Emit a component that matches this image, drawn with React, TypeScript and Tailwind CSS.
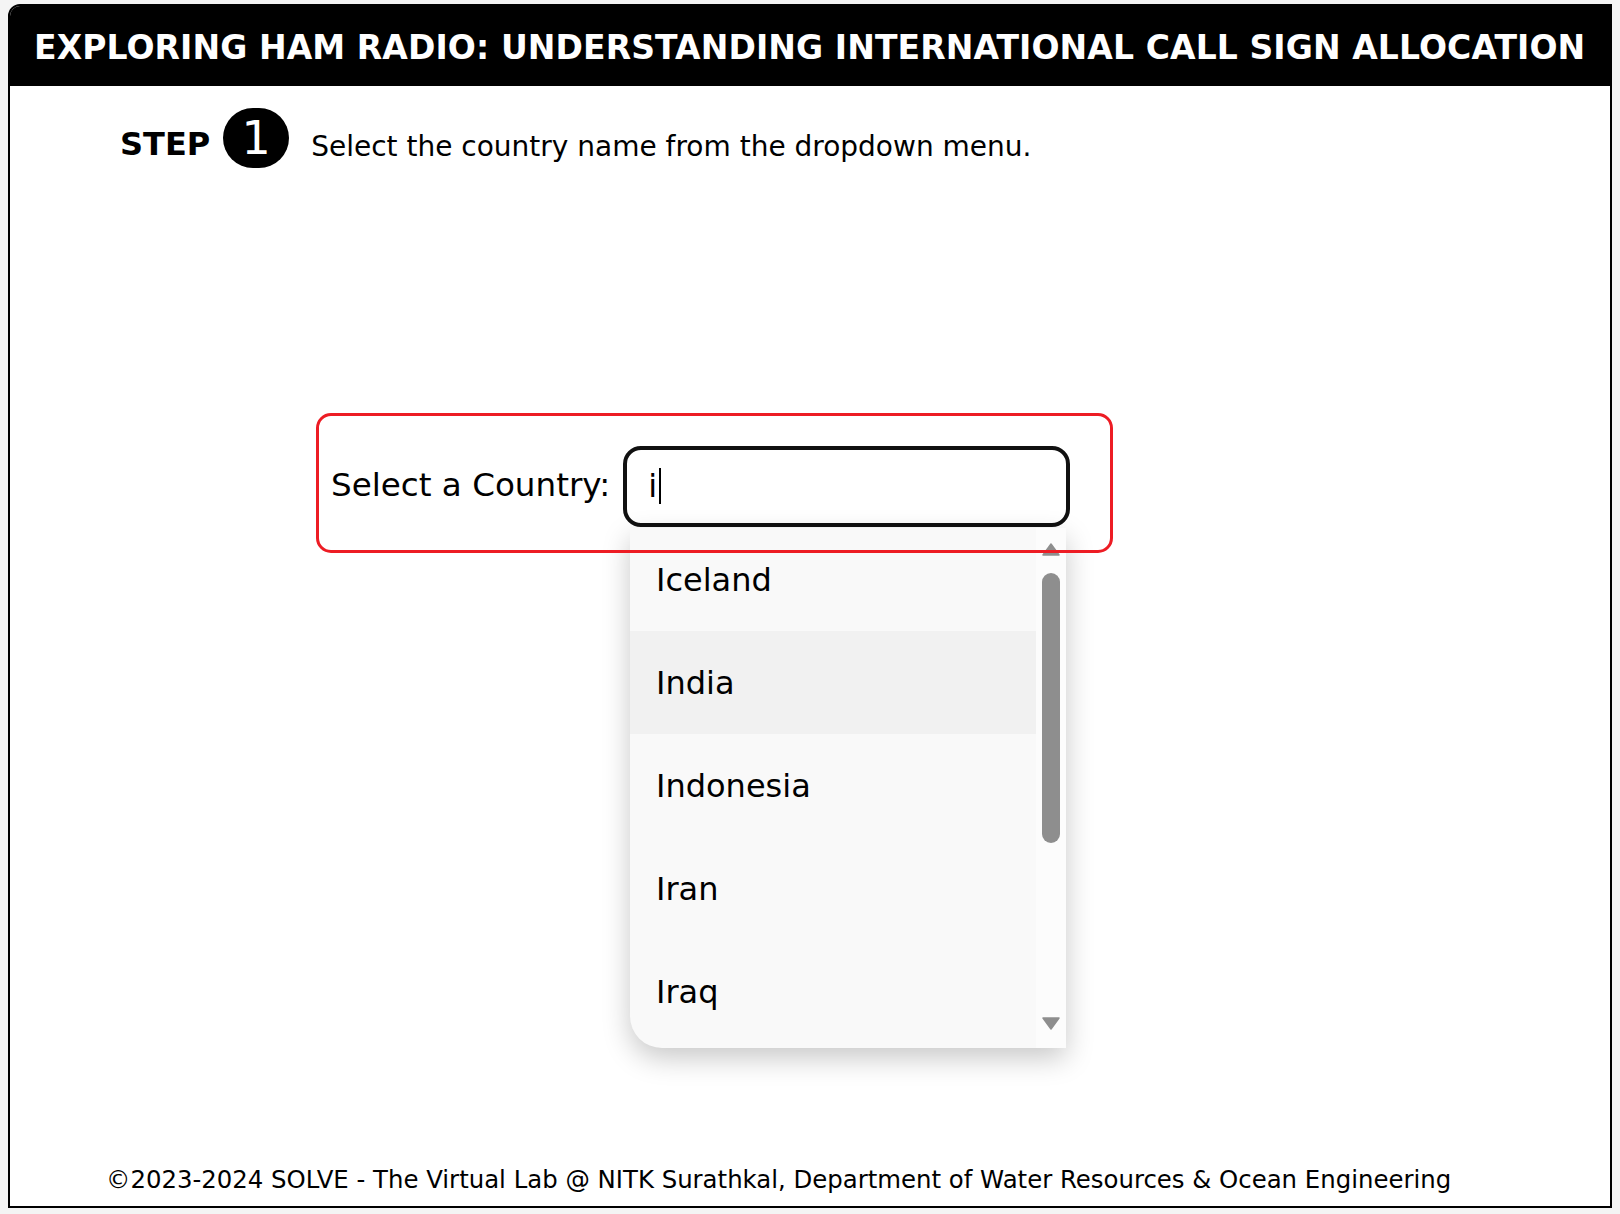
import React from "react";

const items = ["Iceland", "India", "Indonesia", "Iran", "Iraq"];

export default function App() {
  return (
    <div
      className="w-[1620px] h-[1214px] bg-[#f4f4f4] pt-[4px] pl-[8px] overflow-hidden"
      style={{ fontFamily: '"DejaVu Sans", Verdana, sans-serif' }}
    >
      <div className="w-[1604px] h-[1204px] bg-white border-2 border-black rounded-tl-[12px] flex flex-col overflow-hidden">
        <div className="h-[80px] bg-black flex items-center pl-[24px] pt-[2px] shrink-0">
          <h1 className="text-white font-bold text-[33px] leading-none whitespace-nowrap tracking-[0.1px]">
            EXPLORING HAM RADIO: UNDERSTANDING INTERNATIONAL CALL SIGN ALLOCATION
          </h1>
        </div>

        <div className="flex items-end pl-[110px] pt-[22px] h-[82px]">
          <span className="font-bold text-[32px] leading-none text-black mb-[8px]">STEP</span>
          <span className="ml-[13px] w-[66px] h-[60px] rounded-full bg-black flex items-center justify-center text-white text-[46px] leading-none">
            1
          </span>
          <span className="ml-[22px] text-[28px] leading-none text-black mb-[7px]">
            Select the country name from the dropdown menu.
          </span>
        </div>

        <div className="pl-[306px] pt-[245px]">
          <div className="relative w-[797px] h-[140px] flex items-center pl-[15px]">
            <label className="text-[32.6px] leading-none text-black whitespace-nowrap mt-[4px]">
              Select a Country:
            </label>
            <div className="ml-[13px] mt-[6px] w-[447px] h-[81px] border-[4px] border-[#111] rounded-[18px] bg-white flex items-center pl-[21px]">
              <span className="text-[32px] leading-none text-black">i</span>
              <span className="w-[2px] h-[36px] bg-black ml-[2px]"></span>
            </div>

            <div className="absolute left-[314px] top-[115px] w-[436px] h-[520px] bg-[#f9f9f9] rounded-bl-[32px] shadow-[0_10px_28px_rgba(0,0,0,0.22)] flex overflow-hidden z-10">
              <div className="flex-1 flex flex-col">
                {items.map((it) => (
                  <div
                    key={it}
                    className={
                      "h-[103px] shrink-0 flex items-center pl-[26px] text-[32px] leading-none text-black " +
                      (it === "India" ? "bg-[#f1f1f1]" : "")
                    }
                  >
                    {it}
                  </div>
                ))}
              </div>
              <div className="w-[30px] bg-[#fcfcfc] relative">
                <svg className="absolute left-[6px] top-[15px]" width="18" height="13" viewBox="0 0 18 13">
                  <path d="M9 1 L17 12 L1 12 Z" fill="#8e8e8e" strokeLinejoin="round" stroke="#8e8e8e" strokeWidth="1.5" />
                </svg>
                <div className="absolute left-[6px] top-[45px] w-[18px] h-[270px] rounded-full bg-[#8e8e8e]"></div>
                <svg className="absolute left-[6px] top-[489px]" width="18" height="13" viewBox="0 0 18 13">
                  <path d="M1 1 L17 1 L9 12 Z" fill="#8e8e8e" strokeLinejoin="round" stroke="#8e8e8e" strokeWidth="1.5" />
                </svg>
              </div>
            </div>

            <div className="absolute inset-0 border-[3px] border-[#ed1c24] rounded-[15px] pointer-events-none z-20"></div>
          </div>
        </div>

        <div className="mt-auto pl-[96px] pb-[14px]">
          <p className="text-[24.4px] leading-none text-black whitespace-nowrap">
            ©2023-2024 SOLVE - The Virtual Lab @ NITK Surathkal, Department of Water Resources &amp; Ocean Engineering
          </p>
        </div>
      </div>
    </div>
  );
}
